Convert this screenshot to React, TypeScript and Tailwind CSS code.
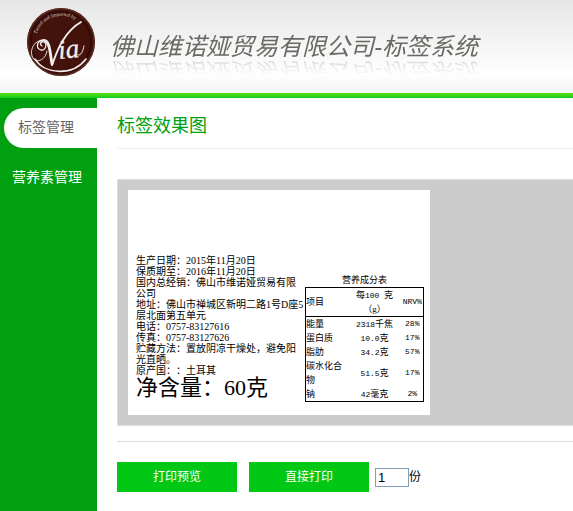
import type { ReactNode } from "react";

const nutrients = [
  { name: "能量", amount: "2318", unit: "千焦", nrv: "28%" },
  { name: "蛋白质", amount: "10.0", unit: "克", nrv: "17%" },
  { name: "脂肪", amount: "34.2", unit: "克", nrv: "57%" },
  { name: "碳水化合物", amount: "51.5", unit: "克", nrv: "17%" },
  { name: "钠", amount: "42", unit: "毫克", nrv: "2%" },
];

const details = [
  "生产日期：2015年11月20日",
  "保质期至：2016年11月20日",
  "国内总经销：佛山市维诺娅贸易有限公司",
  "地址：佛山市禅城区新明二路1号D座5层北面第五单元",
  "电话：0757-83127616",
  "传真：0757-83127626",
  "贮藏方法：置放阴凉干燥处，避免阳光直晒。",
  "原产国：：土耳其",
];

function Logo() {
  return (
    <svg width="70" height="70" viewBox="0 0 70 70" role="img" aria-label="Via">
      <defs>
        <path id="ring" d="M10.5 27 A26 26 0 0 1 56 19" />
      </defs>
      <circle cx="35" cy="35" r="34" fill="#42120b" />
      <circle cx="35" cy="35" r="33.2" fill="none" stroke="#5c2d25" strokeWidth="1.2" />
      <circle cx="35" cy="35" r="30" fill="none" stroke="#300a06" strokeWidth="1.4" />
      <text fill="#d8cbc8" fontFamily="'Liberation Serif', serif" fontSize="5">
        <textPath href="#ring">Tasted and Imported by</textPath>
      </text>
      <g fill="none" stroke="#f4efee" strokeLinecap="round">
        <path d="M16 39 C13 37 15 34 18 35 C22 37 19 44 15 43 C9 41 11 33 18 33" strokeWidth="1.3" />
        <path d="M18 33 C8 33 4 42 6 49 C9 58 20 53 21 44" strokeWidth="0.9" />
        <path d="M19 33.5 C24 35 24 46 26 57" strokeWidth="2.8" />
        <path d="M26 58 C30 48 36 26 55 15" strokeWidth="1.9" />
        <path d="M9 52 C19 68 47 69 60 52" strokeWidth="1.6" />
        <path d="M52 48 C55 49 57 44 58 39" strokeWidth="1" />
      </g>
      <text
        x="33"
        y="52"
        transform="rotate(-6 33 52)"
        fill="#f4efee"
        stroke="#f4efee"
        strokeWidth="0.3"
        fontFamily="'Liberation Serif', serif"
        fontStyle="italic"
        fontSize="27"
      >
        ia
      </text>
    </svg>
  );
}

function NavItem({ active = false, children }: { active?: boolean; children: ReactNode }) {
  return (
    <a
      href="#"
      className={
        active
          ? "ml-1 flex h-10 items-center rounded-l-[20px] bg-white pb-[2px] pl-[14px] text-[#666]"
          : "flex h-10 items-center pb-[2px] pl-3 text-white"
      }
    >
      {children}
    </a>
  );
}

function NutritionTable() {
  return (
    <table className="w-[118px] table-fixed border-collapse text-[9px] leading-[14px]">
      <caption>营养成分表</caption>
      <colgroup>
        <col className="w-[42px]" />
        <col className="w-[54px]" />
        <col className="w-[22px]" />
      </colgroup>
      <thead className="border border-black">
        <tr>
          <th className="p-0 text-left font-normal">项目</th>
          <th className="p-0 font-normal">
            每<span className="font-['Liberation_Mono',monospace] text-[8px] leading-none">100 </span>克
            <br />
            （g）
          </th>
          <th className="p-0 font-['Liberation_Mono',monospace] text-[8px] leading-none font-normal">NRV%</th>
        </tr>
      </thead>
      <tbody className="border border-black">
        {nutrients.map((n) => (
          <tr key={n.name}>
            <td className="p-0">{n.name}</td>
            <td className="p-0 text-center">
              <span className="font-['Liberation_Mono',monospace] text-[8px] leading-none">{n.amount}</span>
              {n.unit}
            </td>
            <td className="p-0 text-center font-['Liberation_Mono',monospace] text-[8px] leading-none">{n.nrv}</td>
          </tr>
        ))}
      </tbody>
    </table>
  );
}

export default function App() {
  return (
    <div className="flex min-h-screen flex-col bg-white font-['Liberation_Sans','Noto_Sans_CJK_SC',sans-serif] text-sm">
      <header className="flex h-[93px] items-start bg-linear-to-b from-[#e6e6e6] via-white via-80% to-[#f4f4f4] pt-[7px] pl-[26px]">
        <Logo />
        <h1 className="mt-[23px] ml-[14px] text-2xl leading-[34px] font-normal whitespace-nowrap text-[#666b63] italic [-webkit-box-reflect:below_-10px_linear-gradient(transparent_35%,rgba(0,0,0,0.3))]">
          佛山维诺娅贸易有限公司-标签系统
        </h1>
      </header>
      <div className="h-[5px] bg-linear-to-b from-[#55e000] to-[#00cc22]" />

      <div className="flex grow">
        <nav className="flex w-[97px] shrink-0 flex-col gap-[10px] bg-[#00a010] pt-[10px]">
          <NavItem active>标签管理</NavItem>
          <NavItem>营养素管理</NavItem>
        </nav>

        <main className="min-w-0 grow pl-5">
          <h2 className="border-b border-[#eee] pt-[15px] pb-[9px] text-lg leading-[26px] text-[#00a010]">
            标签效果图
          </h2>

          <section className="mt-[30px] border border-r-0 border-[#ddd] bg-[#ccc] p-[10px]">
            <div className="flex h-[225px] w-[302px] bg-white font-['Liberation_Serif','Noto_Sans_CJK_SC',serif] text-black [text-spacing-trim:space-all]">
              <div className="w-[177px] shrink-0 pt-[65px] pl-2">
                {details.map((line) => (
                  <p key={line} className="text-[10px] leading-[11px]">
                    {line}
                  </p>
                ))}
                <p className="text-[22px] leading-6 whitespace-nowrap">净含量：60克</p>
              </div>
              <div className="pt-[83px]">
                <NutritionTable />
              </div>
            </div>
          </section>

          <form
            className="mt-[15px] flex items-center border-t border-[#ddd] pt-5 text-xs"
            onSubmit={(e) => e.preventDefault()}
          >
            <button type="button" className="h-[30px] w-[120px] bg-[#00c814] text-white">
              打印预览
            </button>
            <button type="submit" className="ml-3 h-[30px] w-[120px] bg-[#00c814] text-white">
              直接打印
            </button>
            <input
              id="copies"
              type="text"
              defaultValue="1"
              className="ml-[6px] h-[19px] w-[34px] border border-[#7f9db9] px-[2px] text-[13px] text-black"
            />
            <label htmlFor="copies" className="text-black">
              份
            </label>
          </form>
        </main>
      </div>
    </div>
  );
}
